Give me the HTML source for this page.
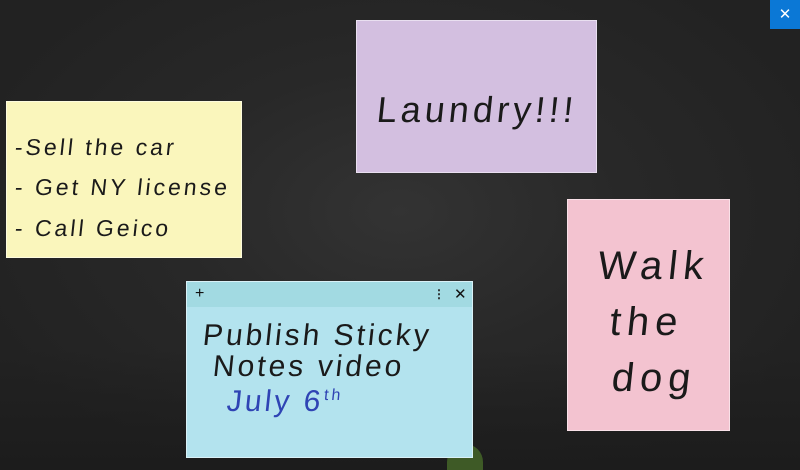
<!DOCTYPE html>
<html><head><meta charset="utf-8"><style>
html,body{margin:0;padding:0}
body{width:800px;height:470px;overflow:hidden;position:relative;background:radial-gradient(ellipse at 50% 45%,#333 0%,#282828 40%,#222 80%);font-family:"Liberation Sans",sans-serif}
.n{position:absolute;box-sizing:border-box;border:1px solid rgba(255,255,255,.5)}
.h{position:absolute;font-family:"Liberation Sans",sans-serif;font-weight:300;color:#1a1a1a;white-space:nowrap;transform:skewX(-6deg);letter-spacing:3px}
</style></head><body>
<div style="position:absolute;left:0;right:0;bottom:0;height:120px;background:linear-gradient(#2a2a2a00,#1c1c1c)"></div>
<div style="position:absolute;left:447px;top:444px;width:36px;height:26px;background:#3e5a26;border-radius:18px 18px 0 0"></div>

<div class="n" style="left:6px;top:101px;width:236px;height:157px;background:#faf6bc">
<div class="h" style="left:8px;top:32px;font-size:23px">-Sell the car</div>
<div class="h" style="left:8px;top:72px;font-size:23px">- Get NY license</div>
<div class="h" style="left:8px;top:113px;font-size:23px">- Call Geico</div>
</div>

<div class="n" style="left:356px;top:20px;width:241px;height:153px;background:#d3bfe0">
<div class="h" style="left:20px;top:68px;font-size:36px;letter-spacing:4px">Laundry!!!</div>
</div>

<div class="n" style="left:567px;top:199px;width:163px;height:232px;background:#f3c3d0">
<div class="h" style="left:30px;top:44px;font-size:40px;letter-spacing:6px">Walk</div>
<div class="h" style="left:42px;top:100px;font-size:40px;letter-spacing:6px">the</div>
<div class="h" style="left:44px;top:156px;font-size:40px;letter-spacing:6px">dog</div>
</div>

<div class="n" style="left:186px;top:281px;width:287px;height:177px;background:#b3e3ee">
<div style="position:absolute;left:0;top:0;right:0;height:25px;background:#a2dae2"></div>
<div style="position:absolute;left:8px;top:3px;font-size:16px;color:#111">+</div>
<div style="position:absolute;left:246px;top:5px;font-size:12px;color:#222;font-weight:bold">⋮</div>
<div style="position:absolute;left:267px;top:3px;font-size:15px;color:#111">✕</div>
<div class="h" style="left:16px;top:37px;font-size:30px">Publish Sticky</div>
<div class="h" style="left:26px;top:68px;font-size:30px">Notes video</div>
<div class="h" style="left:40px;top:103px;font-size:30px;color:#2f44b4">July 6<sup style="font-size:16px">th</sup></div>
</div>

<div style="position:absolute;left:770px;top:0;width:30px;height:29px;background:#0b78d6;color:#fff;font-size:15px;text-align:center;line-height:29px">✕</div>
</body></html>
